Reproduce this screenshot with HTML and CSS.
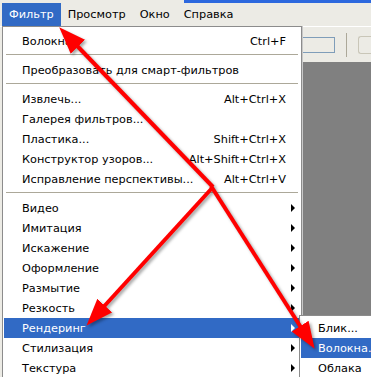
FILE: index.html
```html
<!DOCTYPE html>
<html>
<head>
<meta charset="utf-8">
<link rel="stylesheet" href="styles.css">
</head>
<body>
<div class="screen">
  <div class="titlestrip"></div>
  <div class="menubar">
    <span class="mb-item active">Фильтр</span>
    <span class="mb-item">Просмотр</span>
    <span class="mb-item">Окно</span>
    <span class="mb-item">Справка</span>
  </div>
  <div class="toolbar">
    <div class="tb-input"></div>
    <div class="tb-divider"></div>
    <div class="tb-button"></div>
  </div>
  <div class="workspace"></div>

  <div class="menu">
    <div class="row"><span class="label">Волокна</span><span class="key">Ctrl+F</span></div>
    <div class="sep"></div>
    <div class="row"><span class="label">Преобразовать для смарт-фильтров</span></div>
    <div class="sep"></div>
    <div class="row"><span class="label">Извлечь...</span><span class="key">Alt+Ctrl+X</span></div>
    <div class="row"><span class="label">Галерея фильтров...</span></div>
    <div class="row"><span class="label">Пластика...</span><span class="key">Shift+Ctrl+X</span></div>
    <div class="row"><span class="label">Конструктор узоров...</span><span class="key">Alt+Shift+Ctrl+X</span></div>
    <div class="row"><span class="label">Исправление перспективы...</span><span class="key">Alt+Ctrl+V</span></div>
    <div class="sep"></div>
    <div class="row sub"><span class="label">Видео</span><span class="arrow"></span></div>
    <div class="row sub"><span class="label">Имитация</span><span class="arrow"></span></div>
    <div class="row sub"><span class="label">Искажение</span><span class="arrow"></span></div>
    <div class="row sub"><span class="label">Оформление</span><span class="arrow"></span></div>
    <div class="row sub"><span class="label">Размытие</span><span class="arrow"></span></div>
    <div class="row sub"><span class="label">Резкость</span><span class="arrow"></span></div>
    <div class="row sub hl"><span class="label">Рендеринг</span><span class="arrow"></span></div>
    <div class="row sub"><span class="label">Стилизация</span><span class="arrow"></span></div>
    <div class="row sub"><span class="label">Текстура</span><span class="arrow"></span></div>
  </div>

  <div class="submenu">
    <div class="row"><span class="label">Блик...</span></div>
    <div class="row hl"><span class="label">Волокна...</span></div>
    <div class="row"><span class="label">Облака</span></div>
  </div>

  <svg class="arrows" width="371" height="377" viewBox="0 0 371 377">
    <defs>
      <marker id="head" markerUnits="userSpaceOnUse" markerWidth="28" markerHeight="22" refX="10" refY="11" orient="auto">
        <path d="M0,1 L27,11 L0,21 z" fill="#ff0000"/>
      </marker>
    </defs>
    <g class="arrow-group">
      <line x1="213" y1="187" x2="71" y2="39.5" stroke="#ff0000" stroke-width="4" marker-end="url(#head)"/>
      <line x1="213" y1="187" x2="98" y2="313" stroke="#ff0000" stroke-width="4" marker-end="url(#head)"/>
      <line x1="211" y1="186" x2="305.5" y2="334.5" stroke="#ff0000" stroke-width="4" marker-end="url(#head)"/>
    </g>
  </svg>
</div>
</body>
</html>
```

FILE: styles.css
```css
html, body {
  margin: 0;
  padding: 0;
}
body {
  width: 371px;
  height: 377px;
  overflow: hidden;
  font-family: "DejaVu Sans", "Liberation Sans", sans-serif;
  font-size: 11.3px;
  color: #000;
}
.screen {
  position: relative;
  width: 371px;
  height: 377px;
  display: flex;
  flex-direction: column;
  background: #808080;
}
.titlestrip {
  height: 3px;
  background: linear-gradient(to right, #ecebe5 0 184px, #2d68de 184px);
}
.menubar {
  height: 23px;
  display: flex;
  align-items: stretch;
  background: #ecebe5;
  padding-left: 2px;
  font-size: 11.3px;
}
.mb-item {
  display: flex;
  align-items: center;
  padding: 0 7px;
}
.mb-item.active {
  background: #316ac5;
  color: #fff;
}
.toolbar {
  border-top: 1px solid #fff;
  background: #ecebe5;
  display: flex;
  align-items: center;
  justify-content: flex-end;
  gap: 8px;
  box-sizing: border-box;
  height: 36px;
}
.tb-input {
  width: 36px;
  height: 14px;
  border: 1px solid #7f9db9;
  background: #ecebe5;
}
.tb-divider {
  width: 1px;
  height: 24px;
  background: #aca899;
  margin: 0 3px;
}
.tb-button {
  width: 12px;
  height: 16px;
  border: 1px solid #c9c6b8;
  border-right: none;
  border-radius: 3px 0 0 3px;
}
.workspace {
  flex: 1;
  background: linear-gradient(to right, #ecebe5 0 2px, #808080 2px);
}

.menu {
  position: absolute;
  left: 2px;
  top: 26px;
  width: 300px;
  height: 360px;
  box-sizing: border-box;
  background: #fff;
  border: 1px solid #8c8c8c;
  padding: 4px 1px 0 1px;
  box-shadow: 1px 0 0 #c8c8c8;
}
.row {
  position: relative;
  height: 20px;
  display: flex;
  align-items: center;
  justify-content: space-between;
  padding: 0 14px 0 18px;
  white-space: nowrap;
}
.row.hl {
  background: #316ac5;
  color: #fff;
}
.sep {
  height: 9px;
  box-sizing: border-box;
  padding-top: 3px;
  margin: 0 2px;
}
.sep::before {
  content: "";
  display: block;
  height: 1px;
  background: #aca899;
}
.arrow {
  position: absolute;
  right: 5px;
  top: 6px;
  width: 0;
  height: 0;
  border-top: 4px solid transparent;
  border-bottom: 4px solid transparent;
  border-left: 4px solid #000;
}
.row.hl .arrow {
  border-left-color: #fff;
}
.submenu {
  position: absolute;
  left: 299px;
  top: 315px;
  width: 90px;
  height: 80px;
  box-sizing: border-box;
  background: #fff;
  border: 1px solid #8c8c8c;
  padding: 2px 1px 0 1px;
}
.submenu .row {
  padding-left: 17px;
}
.arrows {
  position: absolute;
  left: 0;
  top: 0;
  pointer-events: none;
}
.arrow-group {
  filter: drop-shadow(2px 2px 1.5px rgba(0, 0, 0, 0.35));
}
```
